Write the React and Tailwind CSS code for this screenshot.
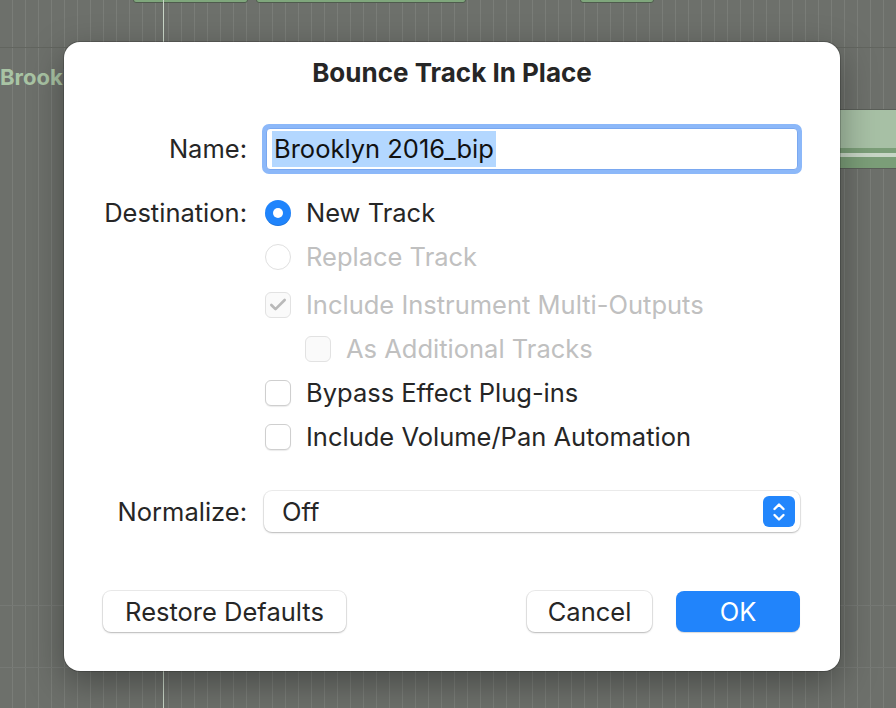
import { Check } from 'lucide-react'

const TEXT = "text-[25.5px] leading-[30px]"

function Radio({ on, disabled }) {
  if (on) return (
    <span className="flex h-[26px] w-[26px] shrink-0 items-center justify-center rounded-full bg-[#1f84fc] shadow-[inset_0_-1px_0_rgba(0,0,0,0.12)]">
      <span className="h-[10px] w-[10px] rounded-full bg-white" />
    </span>
  )
  return (
    <span className={`h-[26px] w-[26px] shrink-0 rounded-full border bg-white ${disabled ? 'border-[#e0e0e0]' : 'border-[#c8c8c8] shadow-[0_1px_1px_rgba(0,0,0,0.08)]'}`} />
  )
}

function Checkbox({ checked, disabled }) {
  return (
    <span className={`flex h-[26px] w-[26px] shrink-0 items-center justify-center rounded-[6px] border ${disabled ? 'border-[#e2e2e2] bg-[#fafafa]' : 'border-[#cfcfcf] bg-white shadow-[0_1px_1px_rgba(0,0,0,0.08)]'}`}>
      {checked && <Check size={20} strokeWidth={3.2} className="text-[#b9b9b9]" />}
    </span>
  )
}

function Option({ control, label, disabled, indent }) {
  return (
    <div className={`flex h-[44px] items-center gap-[15px] ${indent ? 'pl-[41px]' : 'pl-[1px]'}`}>
      {control}
      <span className={`${TEXT} ${disabled ? 'text-[#c0c0c0]' : 'text-[#262626]'}`}>{label}</span>
    </div>
  )
}

function Button({ children, primary, className = '' }) {
  return (
    <button className={`flex h-[41px] items-center justify-center rounded-[8px] ${TEXT} ${primary ? 'bg-[#2184fb] text-white shadow-[0_1px_1px_rgba(0,0,0,0.15)]' : 'bg-white text-[#262626] shadow-[0_0_0_1px_rgba(0,0,0,0.08),0_1px_2px_rgba(0,0,0,0.22)]'} ${className}`}>
      {children}
    </button>
  )
}

function Dialog() {
  return (
    <div className="relative ml-[64px] mt-[42px] flex h-[629px] w-[776px] flex-col rounded-[16px] bg-white shadow-[0_0_0_1px_rgba(0,0,0,0.18),0_12px_36px_rgba(0,0,0,0.35)]">
      <h1 className="mt-[15px] text-center text-[26px] font-bold leading-[32px] text-[#262626]">
        Bounce Track In Place
      </h1>

      {/* Name */}
      <div className="mt-[35px] flex h-[50px] items-center pr-[38px]">
        <span className={`w-[183px] text-right ${TEXT} text-[#262626]`}>Name:</span>
        <div className="ml-[15px] flex-1 rounded-[7px] bg-[#8cb8f9] p-[4px]">
          <div className="flex h-[42px] items-center rounded-[4px] border border-[#7aa8f0] bg-white pl-[5px]">
            <span className={`bg-[#b3d7ff] px-[2px] py-[3px] ${TEXT} text-[#111]`}>Brooklyn 2016_bip</span>
          </div>
        </div>
      </div>

      {/* Destination + options */}
      <div className="mt-[17px] flex">
        <span className={`mt-[7px] w-[183px] text-right ${TEXT} text-[#262626]`}>Destination:</span>
        <div className="ml-[17px] flex flex-col">
          <Option control={<Radio on />} label="New Track" />
          <Option control={<Radio disabled />} label="Replace Track" disabled />
          <div className="h-[4px]" />
          <Option control={<Checkbox checked disabled />} label="Include Instrument Multi-Outputs" disabled />
          <Option control={<Checkbox disabled />} label="As Additional Tracks" disabled indent />
          <Option control={<Checkbox />} label="Bypass Effect Plug-ins" />
          <Option control={<Checkbox />} label="Include Volume/Pan Automation" />
        </div>
      </div>

      {/* Normalize */}
      <div className="mt-[32px] flex h-[41px] items-center pr-[40px]">
        <span className={`w-[183px] text-right ${TEXT} text-[#262626]`}>Normalize:</span>
        <div className="ml-[17px] flex h-[41px] flex-1 items-center justify-between rounded-[8px] bg-white pl-[18px] pr-[5px] shadow-[0_0_0_1px_rgba(0,0,0,0.07),0_1px_2px_rgba(0,0,0,0.22)]">
          <span className={`${TEXT} text-[#262626]`}>Off</span>
          <span className="flex h-[31px] w-[32px] items-center justify-center rounded-[6px] bg-[#2286fc]">
            <svg width="14" height="22" viewBox="0 0 14 22" fill="none" stroke="white" strokeWidth="2.4" strokeLinecap="round" strokeLinejoin="round">
              <path d="M2.5 8 L7 3.5 L11.5 8" />
              <path d="M2.5 14 L7 18.5 L11.5 14" />
            </svg>
          </span>
        </div>
      </div>

      {/* Buttons */}
      <div className="mt-[59px] flex items-center pl-[39px] pr-[40px]">
        <Button className="w-[243px]">Restore Defaults</Button>
        <div className="flex-1" />
        <Button className="w-[125px]">Cancel</Button>
        <Button primary className="ml-[24px] w-[124px]">OK</Button>
      </div>
    </div>
  )
}

export default function App() {
  return (
    <div className="relative h-[708px] w-[896px] overflow-hidden bg-[#6d706b] font-['Inter',sans-serif]">
      {/* arrange area behind the sheet */}
      <div className="absolute inset-0 bg-[image:repeating-linear-gradient(90deg,transparent_0_12px,#7a7d78_12px_13px)]" />
      <div className="absolute left-0 right-0 top-[47px] h-px bg-[#62655f]" />
      <div className="absolute left-0 right-0 top-[605px] h-px bg-[#767975]" />
      <div className="absolute left-0 right-0 top-[667px] h-px bg-[#767975]" />
      <div className="absolute left-[133px] top-[-10px] h-[13px] w-[115px] rounded-b-[3px] border border-[#4f5b4d] bg-[#7fa67c]" />
      <div className="absolute left-[256px] top-[-10px] h-[13px] w-[210px] rounded-b-[3px] border border-[#4f5b4d] bg-[#7fa67c]" />
      <div className="absolute left-[580px] top-[-10px] h-[13px] w-[74px] rounded-b-[3px] border border-[#4f5b4d] bg-[#7fa67c]" />
      <div className="absolute bottom-0 left-[163px] top-0 w-px bg-[#c9d6c7]" />
      <div className="absolute left-0 top-[63px] text-[22px] font-bold leading-[28px] text-[#a9c4a4]">Brooklyn 2016</div>
      <div className="absolute left-[830px] top-[109px] flex h-[60px] w-[80px] flex-col border-y border-[#5a5e58]">
        <div className="h-[38px] bg-[#a7c0a5]" />
        <div className="flex-1 bg-[#7b9e78] pt-[5px]">
          <div className="h-[4px] bg-[#c8d6c6]" />
        </div>
      </div>

      <Dialog />
    </div>
  )
}
